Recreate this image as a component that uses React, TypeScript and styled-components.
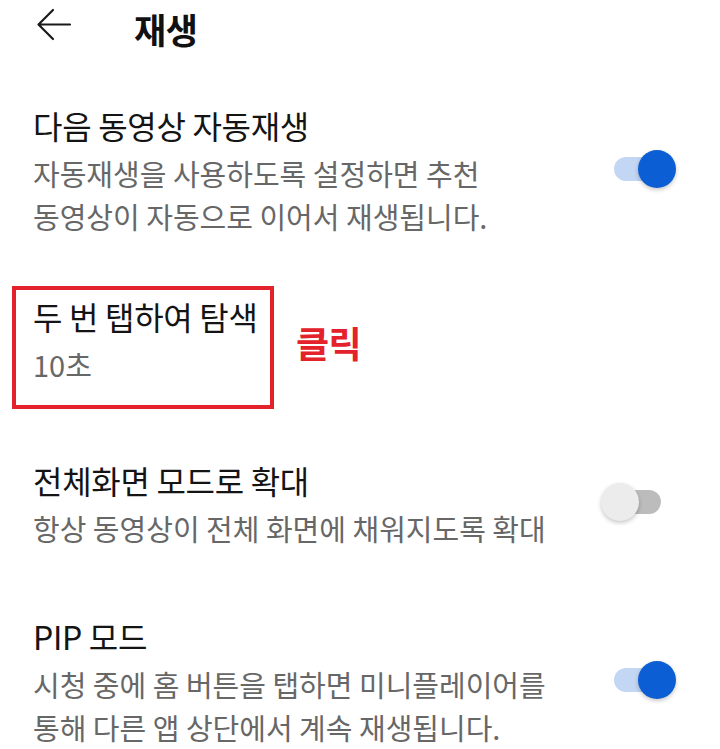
import React, { useState } from "react";
import styled, { createGlobalStyle } from "styled-components";

const GlobalStyle = createGlobalStyle`
  html, body {
    margin: 0;
    padding: 0;
    background: #ffffff;
  }
  body {
    font-family: "Noto Sans CJK KR", "Noto Sans", sans-serif;
    color: #111111;
  }
`;

interface SettingItem {
  id: string;
  title: string;
  desc: string[];
  toggle?: boolean;
  spaceAbove: number;
}

const items: SettingItem[] = [
  {
    id: "autoplay",
    title: "다음 동영상 자동재생",
    desc: ["자동재생을 사용하도록 설정하면 추천", "동영상이 자동으로 이어서 재생됩니다."],
    toggle: true,
    spaceAbove: 45,
  },
  {
    id: "fullscreen",
    title: "전체화면 모드로 확대",
    desc: ["항상 동영상이 전체 화면에 채워지도록 확대"],
    toggle: false,
    spaceAbove: 45,
  },
  {
    id: "pip",
    title: "PIP 모드",
    desc: ["시청 중에 홈 버튼을 탭하면 미니플레이어를", "통해 다른 앱 상단에서 계속 재생됩니다."],
    toggle: true,
    spaceAbove: 60,
  },
];

function Toggle({ initial }: { initial: boolean }) {
  const [on, setOn] = useState(initial);
  return (
    <StSwitch onClick={() => setOn(!on)} aria-pressed={on}>
      <StTrack $on={on} />
      <StThumb $on={on} />
    </StSwitch>
  );
}

function SettingRow({ item }: { item: SettingItem }) {
  return (
    <StRow $space={item.spaceAbove}>
      <StText>
        <StTitle>{item.title}</StTitle>
        {item.desc.map((line) => (
          <StDesc key={line}>{line}</StDesc>
        ))}
      </StText>
      {item.toggle !== undefined && <Toggle initial={item.toggle} />}
    </StRow>
  );
}

export default function App() {
  const [first, ...rest] = items;
  return (
    <StPage>
      <GlobalStyle />
      <StHeader>
        <StBack aria-label="뒤로">
          <svg width="36" height="34" viewBox="0 0 36 34" fill="none">
            <path
              d="M34 16.5H3M17 2L2.5 16.5L17 31"
              stroke="#1a1a1a"
              strokeWidth="2.2"
              strokeLinecap="round"
              strokeLinejoin="round"
            />
          </svg>
        </StBack>
        <StHeading>재생</StHeading>
      </StHeader>

      <SettingRow item={first} />

      <StMarkedRow>
        <StHighlight>
          <StTitle>두 번 탭하여 탐색</StTitle>
          <StDesc>10초</StDesc>
        </StHighlight>
        <StClickLabel>클릭</StClickLabel>
      </StMarkedRow>

      {rest.map((item) => (
        <SettingRow key={item.id} item={item} />
      ))}
    </StPage>
  );
}

const StPage = styled.div`
  width: 720px;
  min-height: 749px;
  padding: 0 44px 0 33px;
  box-sizing: border-box;
  overflow: hidden;
`;

const StHeader = styled.header`
  display: flex;
  align-items: center;
  height: 54px;
`;

const StBack = styled.button`
  display: flex;
  align-items: center;
  justify-content: center;
  border: none;
  background: none;
  padding: 0;
  margin: -4px 0 0 3px;
  cursor: pointer;
`;

const StHeading = styled.h1`
  margin: 2px 0 0 62px;
  font-size: 35px;
  font-weight: 700;
  letter-spacing: -0.5px;
  color: #111111;
`;

const StRow = styled.div<{ $space: number }>`
  display: flex;
  align-items: center;
  justify-content: space-between;
  margin-top: ${(p) => p.$space}px;
`;

const StText = styled.div`
  display: flex;
  flex-direction: column;
`;

const StTitle = styled.div`
  font-size: 32px;
  line-height: 53px;
  color: #141414;
  letter-spacing: -0.3px;
  white-space: nowrap;
`;

const StDesc = styled.div`
  font-size: 29px;
  line-height: 43px;
  color: #676767;
  letter-spacing: 0;
  white-space: nowrap;
`;

const StMarkedRow = styled.div`
  display: flex;
  align-items: center;
  margin-top: 48px;
`;

const StHighlight = styled.div`
  display: flex;
  flex-direction: column;
  width: 262px;
  box-sizing: border-box;
  margin-left: -21px;
  padding: 0 0 19px 17px;
  border: 4px solid #e3222b;
`;

const StClickLabel = styled.span`
  margin: 0 0 12px 22px;
  font-size: 36px;
  font-weight: 700;
  color: #e3222b;
  letter-spacing: -0.5px;
`;

const StSwitch = styled.button`
  position: relative;
  flex: none;
  width: 75px;
  height: 40px;
  border: none;
  background: none;
  padding: 0;
  cursor: pointer;
`;

const StTrack = styled.span<{ $on: boolean }>`
  position: absolute;
  left: 13px;
  top: 8px;
  width: 47px;
  height: 24px;
  border-radius: 12px;
  background: ${(p) => (p.$on ? "#c3d6f3" : "#bcbcbc")};
`;

const StThumb = styled.span<{ $on: boolean }>`
  position: absolute;
  top: 1px;
  left: ${(p) => (p.$on ? "37px" : "0px")};
  width: 38px;
  height: 38px;
  border-radius: 50%;
  background: ${(p) => (p.$on ? "#0b5ed4" : "#ececec")};
  box-shadow: 0 2px 4px rgba(0, 0, 0, 0.22);
`;
